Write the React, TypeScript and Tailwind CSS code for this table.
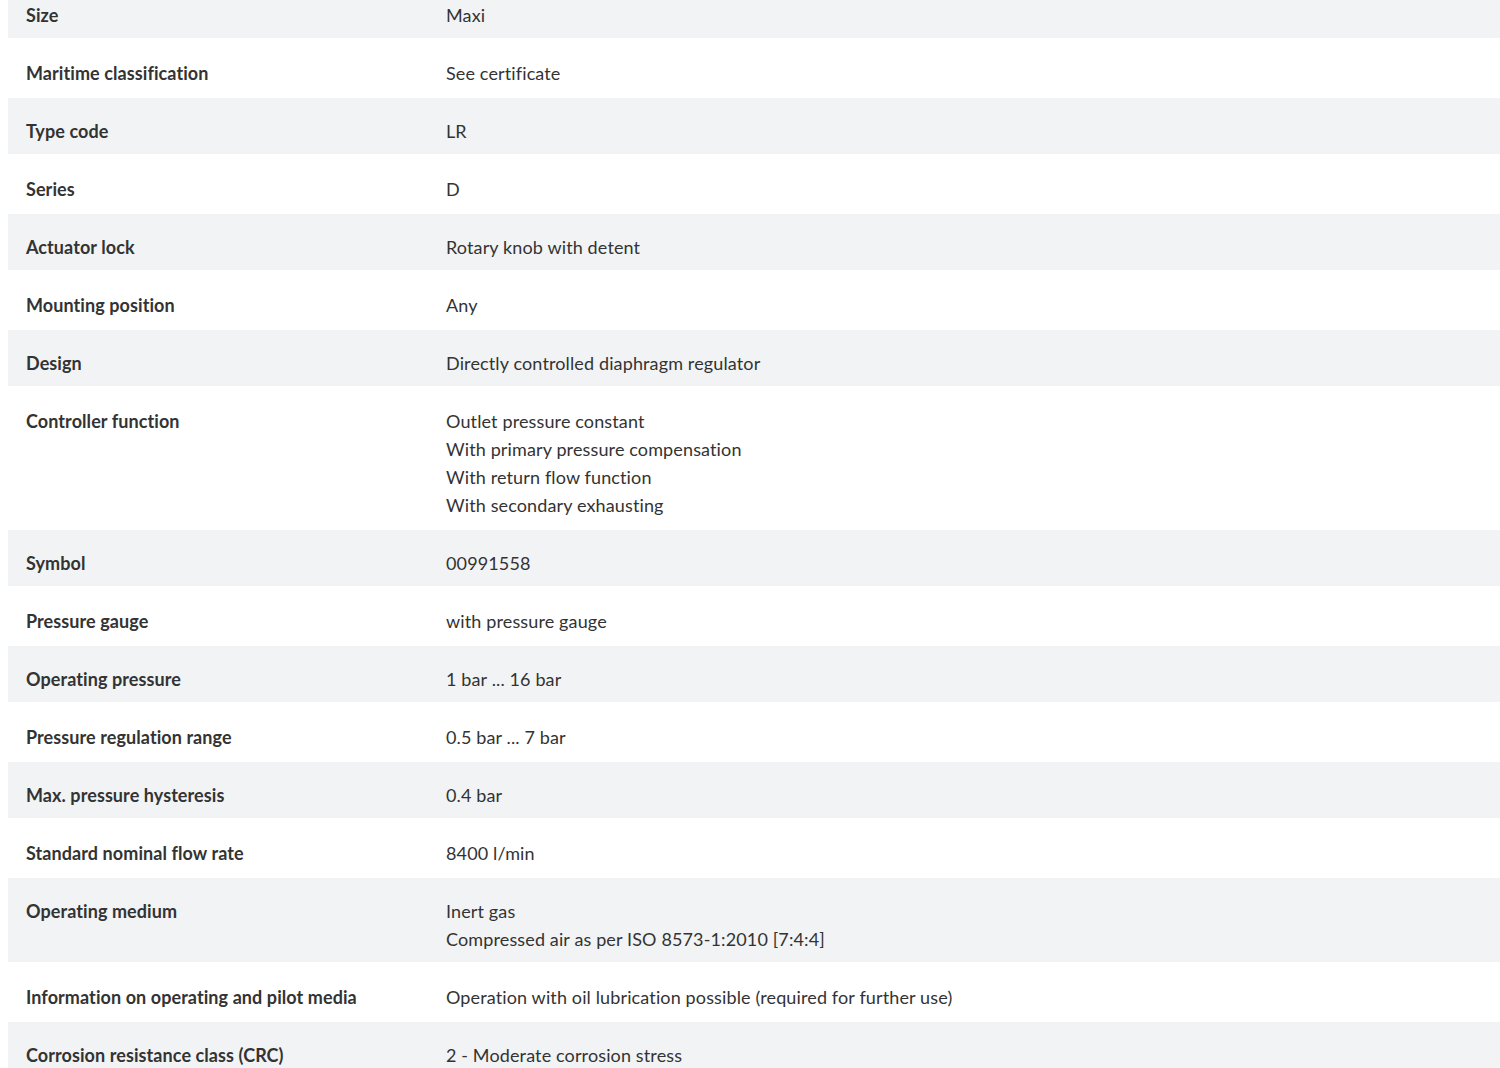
const rows: { label: string; values: string[] }[] = [
  { label: 'Size', values: ['Maxi'] },
  { label: 'Maritime classification', values: ['See certificate'] },
  { label: 'Type code', values: ['LR'] },
  { label: 'Series', values: ['D'] },
  { label: 'Actuator lock', values: ['Rotary knob with detent'] },
  { label: 'Mounting position', values: ['Any'] },
  { label: 'Design', values: ['Directly controlled diaphragm regulator'] },
  {
    label: 'Controller function',
    values: [
      'Outlet pressure constant',
      'With primary pressure compensation',
      'With return flow function',
      'With secondary exhausting',
    ],
  },
  { label: 'Symbol', values: ['00991558'] },
  { label: 'Pressure gauge', values: ['with pressure gauge'] },
  { label: 'Operating pressure', values: ['1 bar ... 16 bar'] },
  { label: 'Pressure regulation range', values: ['0.5 bar ... 7 bar'] },
  { label: 'Max. pressure hysteresis', values: ['0.4 bar'] },
  { label: 'Standard nominal flow rate', values: ['8400 l/min'] },
  { label: 'Operating medium', values: ['Inert gas', 'Compressed air as per ISO 8573-1:2010 [7:4:4]'] },
  { label: 'Information on operating and pilot media', values: ['Operation with oil lubrication possible (required for further use)'] },
  { label: 'Corrosion resistance class (CRC)', values: ['2 - Moderate corrosion stress'] },
];

export default function App() {
  return (
    <div className="h-[1068px] overflow-hidden bg-white">
      <div className="-mt-[19px] pl-2 font-['Lato',sans-serif] text-[18px] leading-[28px] text-[#333]">
        {rows.map((row, i) => (
          <div
            key={row.label}
            className={`flex border-y border-white ${i % 2 === 0 ? 'bg-[#f2f3f5]' : 'bg-white'}`}
          >
            <div className="w-[420px] shrink-0 pl-[18px] pr-4 pt-[19px] pb-[9px] font-bold tracking-[0.08px]">
              {row.label}
            </div>
            <div className="flex-1 px-[18px] pt-[19px] pb-[9px] tracking-[0.13px]">
              {row.values.map((v) => (
                <div key={v}>{v}</div>
              ))}
            </div>
          </div>
        ))}
      </div>
    </div>
  );
}
